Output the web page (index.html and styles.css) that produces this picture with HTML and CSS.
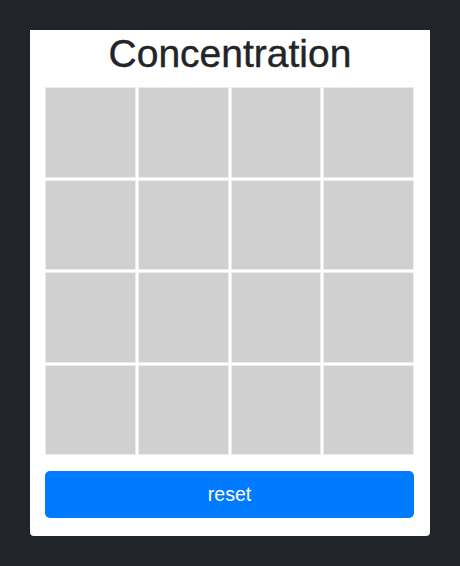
FILE: index.html
```html
<!DOCTYPE html>
<html>
<head>
<meta charset="utf-8">
<link rel="stylesheet" href="styles.css">
</head>
<body>
<div class="card">
  <h1 class="title">Concentration</h1>
  <div class="board">
    <div class="tile"></div><div class="tile"></div><div class="tile"></div><div class="tile"></div>
    <div class="tile"></div><div class="tile"></div><div class="tile"></div><div class="tile"></div>
    <div class="tile"></div><div class="tile"></div><div class="tile"></div><div class="tile"></div>
    <div class="tile"></div><div class="tile"></div><div class="tile"></div><div class="tile"></div>
  </div>
  <button class="reset">reset</button>
</div>
</body>
</html>
```
FILE: styles.css
```css
html, body {
  margin: 0;
  padding: 0;
  background: #212529;
  font-family: "Liberation Sans", Arial, sans-serif;
}
body {
  padding: 30px 30px 0;
}
.card {
  width: 400px;
  box-sizing: border-box;
  background: #fff;
  padding: 0 15px 18px;
  border-radius: 0 0 4px 4px;
  display: flex;
  flex-direction: column;
}
.title {
  margin: 0 0 9px;
  font-size: 39px;
  line-height: 48px;
  font-weight: normal;
  color: #212529;
  text-align: center;
  -webkit-text-stroke: 0.4px #212529;
}
.board {
  display: grid;
  grid-template-columns: repeat(4, 1fr);
  grid-auto-rows: 90.5px;
  gap: 2px;
  width: 369px;
}
.tile {
  background: #d0d0d0;
  border: 1px solid #ececec;
}
.reset {
  margin-top: 16px;
  width: 369px;
  height: 47px;
  border: none;
  border-radius: 5px;
  background: #007bff;
  color: #fff;
  font-family: "Liberation Sans", Arial, sans-serif;
  font-size: 19.5px;
  padding: 0;
}
```
